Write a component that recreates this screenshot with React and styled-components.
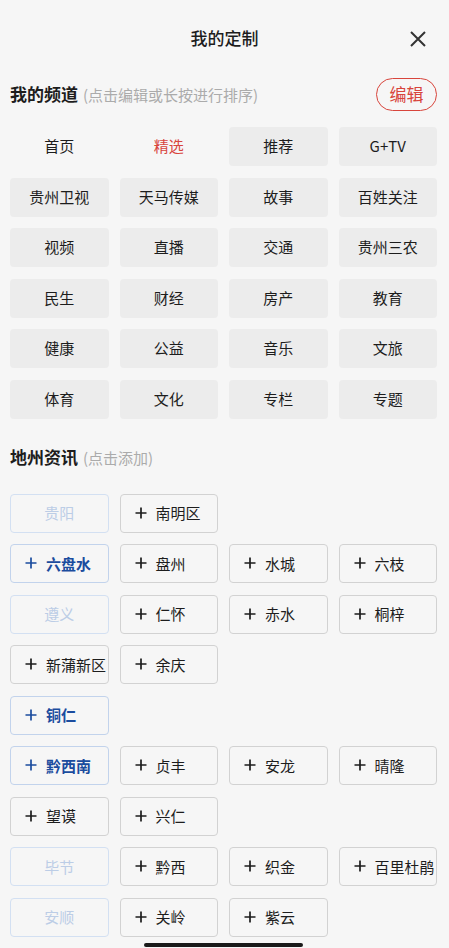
import styled, { createGlobalStyle } from "styled-components";

const GlobalStyle = createGlobalStyle`
  html, body {
    margin: 0;
    padding: 0;
    background: #f6f6f6;
  }
  body {
    font-family: "Noto Sans CJK SC", "Noto Sans", sans-serif;
    color: #1d1d1d;
  }
`;

const CHANNELS = [
  { name: "首页", fixed: true },
  { name: "精选", fixed: true, current: true },
  { name: "推荐" },
  { name: "G+TV" },
  { name: "贵州卫视" },
  { name: "天马传媒" },
  { name: "故事" },
  { name: "百姓关注" },
  { name: "视频" },
  { name: "直播" },
  { name: "交通" },
  { name: "贵州三农" },
  { name: "民生" },
  { name: "财经" },
  { name: "房产" },
  { name: "教育" },
  { name: "健康" },
  { name: "公益" },
  { name: "音乐" },
  { name: "文旅" },
  { name: "体育" },
  { name: "文化" },
  { name: "专栏" },
  { name: "专题" },
];

const REGIONS = [
  { name: "贵阳", added: true, items: ["南明区"] },
  { name: "六盘水", items: ["盘州", "水城", "六枝"] },
  { name: "遵义", added: true, items: ["仁怀", "赤水", "桐梓", "新蒲新区", "余庆"] },
  { name: "铜仁", items: [] },
  { name: "黔西南", items: ["贞丰", "安龙", "晴隆", "望谟", "兴仁"] },
  { name: "毕节", added: true, items: ["黔西", "织金", "百里杜鹃"] },
  { name: "安顺", added: true, items: ["关岭", "紫云"] },
];

function Plus({ color = "#1d1d1d" }) {
  return (
    <svg width="12" height="12" viewBox="0 0 12 12">
      <path d="M6 0.5V11.5M0.5 6H11.5" stroke={color} strokeWidth="1.7" />
    </svg>
  );
}

export default function App() {
  return (
    <Page>
      <GlobalStyle />
      <Header>
        <Title>我的定制</Title>
        <CloseButton aria-label="关闭">
          <svg width="18" height="18" viewBox="0 0 18 18">
            <path d="M2 2L16 16M16 2L2 16" stroke="#333" strokeWidth="2" />
          </svg>
        </CloseButton>
      </Header>

      <SectionHead>
        <SectionTitle>
          我的频道<Hint>(点击编辑或长按进行排序)</Hint>
        </SectionTitle>
        <EditButton>编辑</EditButton>
      </SectionHead>

      <ChannelGrid>
        {CHANNELS.map((c) => (
          <ChannelTile key={c.name} $fixed={c.fixed} $current={c.current}>
            {c.name}
          </ChannelTile>
        ))}
      </ChannelGrid>

      <SectionHead $second>
        <SectionTitle>
          地州资讯<Hint>(点击添加)</Hint>
        </SectionTitle>
      </SectionHead>

      <RegionGrid>
        {REGIONS.map((r) => [
          <CityButton key={r.name} $added={r.added}>
            {!r.added && <Plus color="#1b4c9e" />}
            {r.name}
          </CityButton>,
          ...r.items.map((c) => (
            <CountyButton key={r.name + c}>
              <Plus />
              {c}
            </CountyButton>
          )),
        ])}
      </RegionGrid>

      <HomeBar />
    </Page>
  );
}

const Page = styled.div`
  position: relative;
  width: 449px;
  height: 948px;
  overflow: hidden;
  background: #f6f6f6;
`;

const Header = styled.div`
  position: relative;
  height: 78px;
  display: flex;
  align-items: center;
  justify-content: center;
`;

const Title = styled.div`
  font-size: 17px;
  font-weight: 500;
  color: #1d1d1d;
  padding-bottom: 3px;
`;

const CloseButton = styled.button`
  position: absolute;
  right: 22px;
  top: 30px;
  width: 18px;
  height: 18px;
  padding: 0;
  border: none;
  background: none;
  display: flex;
`;

const SectionHead = styled.div`
  height: 33px;
  display: flex;
  align-items: center;
  justify-content: space-between;
  padding: 0 12px 0 10px;
  margin: ${(p) => (p.$second ? "23px 0 19px" : "0 0 16px")};
`;

const SectionTitle = styled.div`
  font-size: 17px;
  font-weight: 700;
  color: #1d1d1d;
  padding-bottom: 3px;
`;

const Hint = styled.span`
  font-size: 15px;
  font-weight: 400;
  color: #ababab;
  margin-left: 5px;
`;

const EditButton = styled.button`
  width: 61px;
  height: 33px;
  border: 1.5px solid #d8453c;
  border-radius: 17px;
  background: transparent;
  color: #d8453c;
  font-family: inherit;
  font-size: 17px;
  padding: 0 0 2px;
`;

const ChannelGrid = styled.div`
  display: grid;
  grid-template-columns: repeat(4, 1fr);
  column-gap: 11px;
  row-gap: 11.6px;
  padding: 0 12px 0 10px;
`;

const ChannelTile = styled.div`
  height: 39px;
  box-sizing: border-box;
  padding-bottom: 2px;
  border-radius: 4px;
  display: flex;
  align-items: center;
  justify-content: center;
  font-size: 15px;
  background: ${(p) => (p.$fixed ? "transparent" : "#ececec")};
  color: ${(p) => (p.$current ? "#d8453c" : "#1d1d1d")};
`;

const RegionGrid = styled.div`
  display: grid;
  grid-template-columns: repeat(4, 1fr);
  column-gap: 11px;
  row-gap: 11.5px;
  padding: 0 12px 0 10px;
`;

const CityButton = styled.div`
  grid-column-start: 1;
  height: 39px;
  box-sizing: border-box;
  border: 1px solid ${(p) => (p.$added ? "#d3e0f2" : "#c2d3ec")};
  border-radius: 4px;
  display: flex;
  align-items: center;
  justify-content: ${(p) => (p.$added ? "center" : "flex-start")};
  gap: 9px;
  padding: 0 0 1px ${(p) => (p.$added ? "0" : "14px")};
  font-size: 15px;
  font-weight: ${(p) => (p.$added ? 400 : 700)};
  color: ${(p) => (p.$added ? "#bccde6" : "#1b4c9e")};
`;

const CountyButton = styled.div`
  height: 39px;
  box-sizing: border-box;
  border: 1px solid #d2d2d2;
  border-radius: 4px;
  display: flex;
  align-items: center;
  gap: 9px;
  padding: 0 0 1px 14px;
  font-size: 15px;
  color: #1d1d1d;
  white-space: nowrap;
`;

const HomeBar = styled.div`
  position: absolute;
  left: 144px;
  bottom: 1px;
  width: 159px;
  height: 4px;
  border-radius: 2px;
  background: #1a1a1a;
`;
